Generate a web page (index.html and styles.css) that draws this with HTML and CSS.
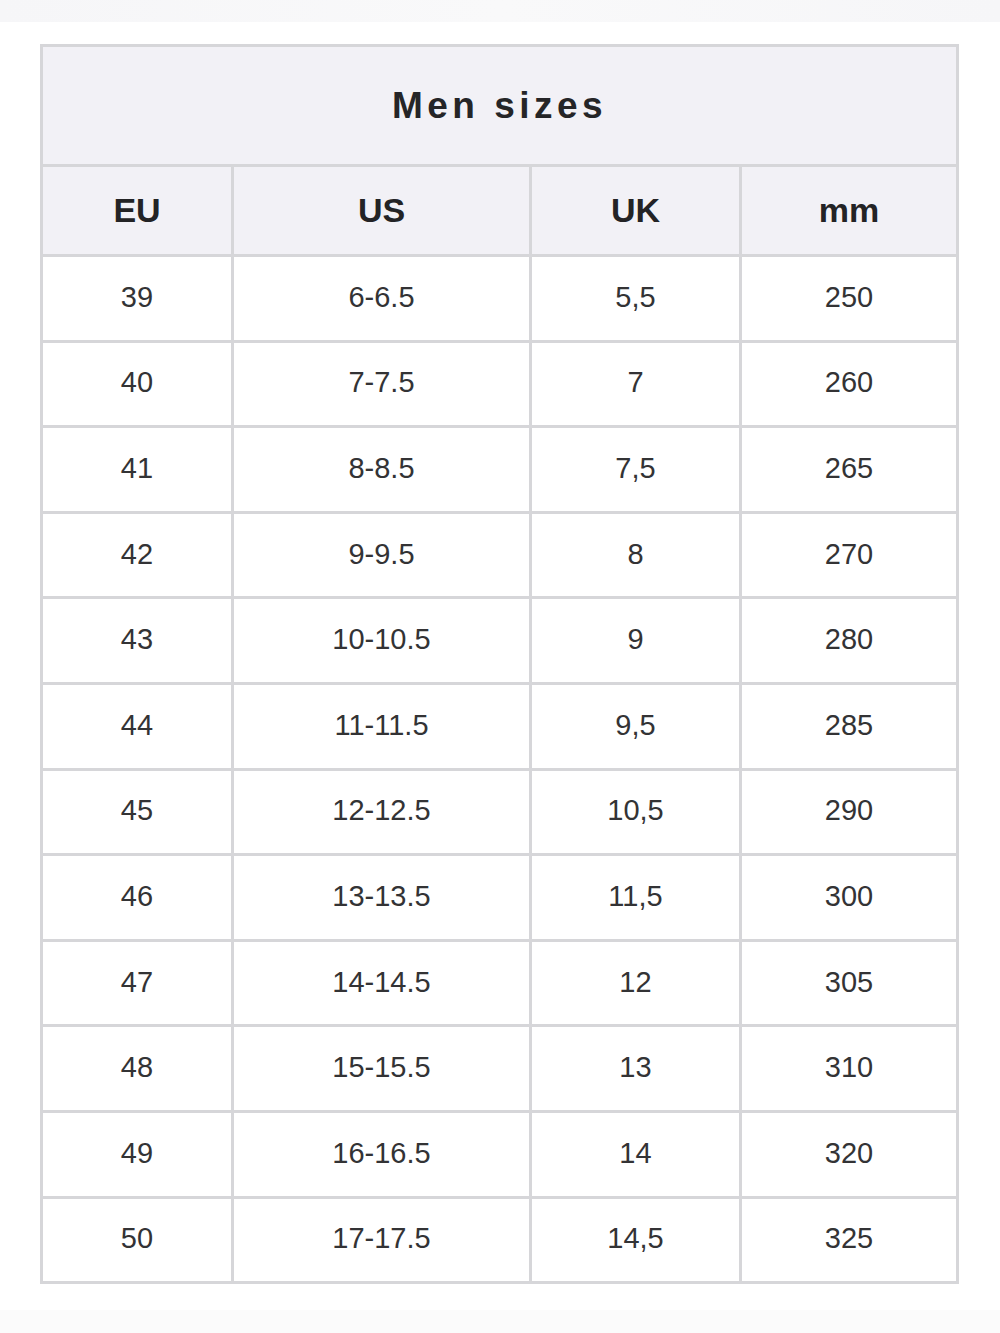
FILE: index.html
```html
<!DOCTYPE html>
<html>
<head>
<meta charset="utf-8">
<link rel="stylesheet" href="styles.css">
</head>
<body>
<div class="top-band"></div>
<div class="wrap">
<table class="sizes">
  <colgroup>
    <col class="c1"><col class="c2"><col class="c3"><col class="c4">
  </colgroup>
  <thead>
    <tr class="title-row"><th colspan="4" class="title">Men sizes</th></tr>
    <tr class="head-row"><th>EU</th><th>US</th><th>UK</th><th>mm</th></tr>
  </thead>
  <tbody>
    <tr><td>39</td><td>6-6.5</td><td>5,5</td><td>250</td></tr>
    <tr><td>40</td><td>7-7.5</td><td>7</td><td>260</td></tr>
    <tr><td>41</td><td>8-8.5</td><td>7,5</td><td>265</td></tr>
    <tr><td>42</td><td>9-9.5</td><td>8</td><td>270</td></tr>
    <tr><td>43</td><td>10-10.5</td><td>9</td><td>280</td></tr>
    <tr><td>44</td><td>11-11.5</td><td>9,5</td><td>285</td></tr>
    <tr><td>45</td><td>12-12.5</td><td>10,5</td><td>290</td></tr>
    <tr><td>46</td><td>13-13.5</td><td>11,5</td><td>300</td></tr>
    <tr><td>47</td><td>14-14.5</td><td>12</td><td>305</td></tr>
    <tr><td>48</td><td>15-15.5</td><td>13</td><td>310</td></tr>
    <tr><td>49</td><td>16-16.5</td><td>14</td><td>320</td></tr>
    <tr><td>50</td><td>17-17.5</td><td>14,5</td><td>325</td></tr>
  </tbody>
</table>
</div>
<div class="bottom-band"></div>
</body>
</html>
```
FILE: styles.css
```css
html, body {
  margin: 0;
  padding: 0;
  background: #ffffff;
}
body {
  font-family: "Liberation Sans", Arial, Helvetica, sans-serif;
  width: 1000px;
  height: 1333px;
  overflow: hidden;
  display: flex;
  flex-direction: column;
}
.top-band {
  height: 22px;
  background: linear-gradient(to right, #f6f6f8, #f9f9fa 50%, #f6f6f8);
  flex: none;
}
.wrap {
  padding: 22px 0 0 40px;
  flex: none;
}
.sizes {
  border-collapse: collapse;
  width: 916px;
  table-layout: fixed;
  border: 3px solid #d6d6d9;
}
.c1 { width: 191px; }
.c2 { width: 298px; }
.c3 { width: 210px; }
.c4 { width: 217px; }
.sizes th, .sizes td {
  border: 3px solid #d6d6d9;
  text-align: center;
  vertical-align: middle;
  padding: 0;
}
.title-row { height: 120px; }
.title {
  background: #f2f1f6;
  font-size: 37px;
  font-weight: bold;
  letter-spacing: 4.5px;
  color: #252527;
}
.head-row { height: 90px; }
.head-row th {
  background: #f2f1f6;
  font-size: 34px;
  font-weight: bold;
  color: #232325;
}
.sizes tbody tr { height: 85.6px; }
.sizes td {
  font-size: 29px;
  color: #333335;
  background: #ffffff;
  padding-bottom: 2px;
}
.bottom-band {
  flex: 1;
  margin-top: 26px;
  background: #fbfbfb;
}
```
